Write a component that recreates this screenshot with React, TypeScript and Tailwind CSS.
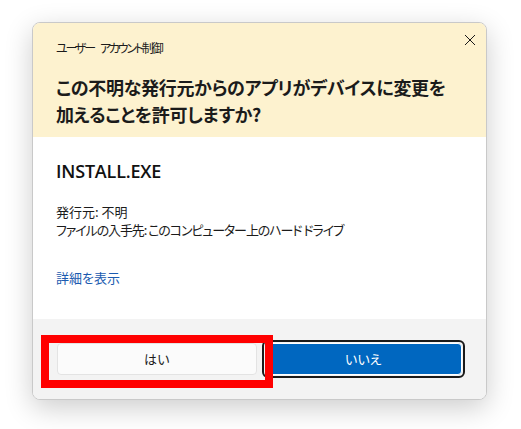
import React from "react";

const CloseIcon = () => (
  <svg width="12" height="12" viewBox="0 0 12 12" fill="none">
    <path d="M1 1L11 11M11 1L1 11" stroke="#1a1a1a" strokeWidth="1" />
  </svg>
);

const App: React.FC = () => {
  return (
    <div className="w-[521px] h-[429px] bg-white pt-[22px] pl-[32px] [font-family:'Noto_Sans_CJK_JP','Noto_Sans',sans-serif] [font-feature-settings:'palt']">
      <div className="relative w-[455px] h-[378px] rounded-[8px] border border-[#c9c9c9] overflow-hidden shadow-[0_8px_28px_rgba(0,0,0,0.2)] flex flex-col bg-white">
        <div className="bg-[#fdf2cf] h-[114px] pl-[23px] pr-[20px] pt-[17px] relative">
          <div className="flex text-[12px] leading-[16px] text-[#1b1b1b] tracking-[-2.2px]">
            <span>ユーザー</span>
            <span className="ml-[6px]">アカウント制御</span>
          </div>
          <div className="mt-[18px] text-[18px] leading-[27px] font-semibold text-[#1b1b1b] tracking-[-0.3px]">
            この不明な発行元からのアプリがデバイスに変更を
            <br />
            加えることを許可しますか?
          </div>
          <button className="absolute top-[11px] right-[10px] w-[12px] h-[12px] flex items-center justify-center">
            <CloseIcon />
          </button>
        </div>
        <div className="flex-1 pl-[23px] pt-[22px]">
          <div className="text-[18px] leading-[24px] font-semibold text-[#111] [font-family:'Open_Sans',sans-serif] tracking-[-0.2px]">
            INSTALL.EXE
          </div>
          <div className="mt-[20px] text-[13px] leading-[18px] text-[#1b1b1b]">
            <div>発行元: 不明</div>
            <div className="tracking-[-1.1px]">ファイルの入手先: このコンピューター上のハード ドライブ</div>
          </div>
          <div className="mt-[30px] text-[13px] leading-[18px] text-[#1b5bb0]">詳細を表示</div>
        </div>
        <div className="bg-[#f3f3f3] h-[80px] px-[24px] py-[24px] flex gap-[8px]">
          <button className="flex-1 h-[32px] rounded-[4px] bg-[#fbfbfb] border border-[#e3e3e3] text-[13px] text-[#1b1b1b]">
            はい
          </button>
          <div className="flex-1 h-[32px] relative">
            <div className="absolute -inset-[3px] rounded-[6px] border-2 border-[#1a1a1a]" />
            <button className="w-full h-full rounded-[4px] bg-[#0067c0] border border-white text-[13px] text-white">
              いいえ
            </button>
          </div>
        </div>
      </div>
      <div className="absolute left-[41px] top-[335px] w-[232px] h-[53px] border-[8px] border-[#ff0000]" />
    </div>
  );
};

export default App;
